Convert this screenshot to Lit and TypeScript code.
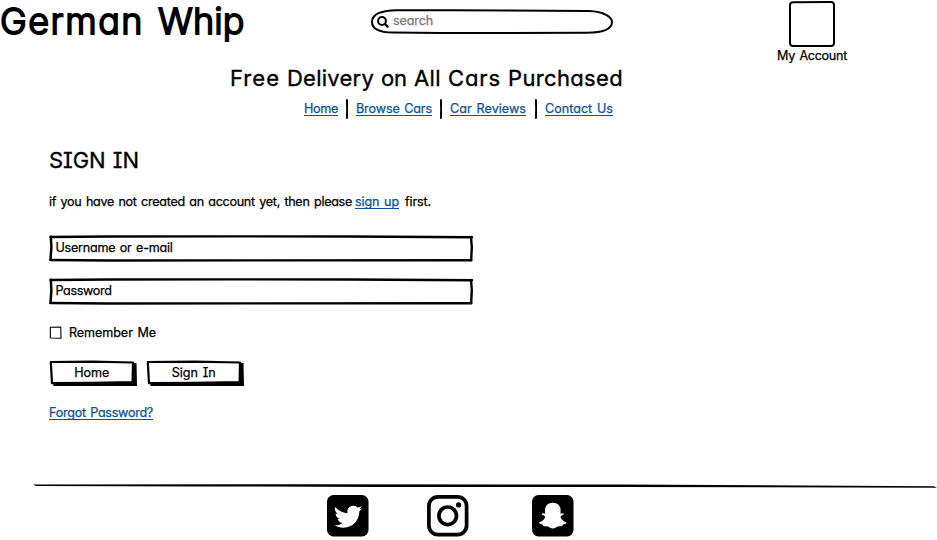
import { LitElement, html, css, svg } from "lit";
import { customElement, property } from "lit/decorators.js";

/** A run of lettering tracked so that it fills the given width. */
@customElement("fit-text")
class FitText extends LitElement {
  @property({ type: Number }) width = 0;
  @property() text = "";

  static styles = css`
    :host { display: inline-block; white-space: pre; flex: none; }
    span { display: inline-block; }
  `;

  render() {
    return html`<span>${this.text}</span>`;
  }

  updated() {
    const span = this.renderRoot.querySelector("span") as HTMLElement;
    span.style.letterSpacing = "0px";
    const natural = span.getBoundingClientRect().width;
    const gap = (this.width - natural) / this.text.length;
    span.style.letterSpacing = gap.toFixed(3) + "px";
  }
}

const t = (text: string, width: number) => html`<fit-text .text=${text} .width=${width}></fit-text>`;

const fieldFrame = svg`
  <path d="M1.6 2 L60 1.5 L180 1.4 L300 1.5 L423 2.2" stroke-width="2.4"/>
  <path d="M1.4 25 L60 25.5 L200 25.4 L422.3 25.2" stroke-width="2.4"/>
  <path d="M1.8 1.8 L2.4 12 L1.5 24.8" stroke-width="2.5"/>
  <path d="M422 2 L422.8 12 L422.2 25" stroke-width="2.4"/>`;

@customElement("app-root")
class AppRoot extends LitElement {
  static styles = css`
    :host {
      display: block;
      width: 937px;
      height: 540px;
      overflow: hidden;
      background: #fff;
      color: #000;
      font: 400 12.6px/22px Inter, "Noto Sans", sans-serif;
      font-feature-settings: "cv11" 1, "cv08" 1, "calt" 0;
      word-spacing: 1.2px;
      -webkit-text-stroke: 0.25px currentColor;
    }
    svg { display: block; fill: none; stroke: #000; stroke-linecap: round; stroke-linejoin: round; flex: none; }
    header { display: flex; height: 63px; align-items: flex-start; }
    .brand {
      display: flex; gap: 14px; margin: 0; width: 371px;
      font-size: 36px; line-height: 43px; font-weight: 300;
      -webkit-text-stroke: 1.8px #000; stroke-linejoin: round;
    }
    .search { display: grid; width: 242px; height: 25px; margin-top: 9px; }
    .search > * { grid-area: 1 / 1; }
    .search .hint { color: #77777f; padding: 2px 0 0 22px; height: 20px; line-height: 19px; }
    .account { margin: 1px 0 0 164px; width: 70px; display: flex; flex-direction: column; align-items: center; }
    .account svg { margin-bottom: -2px; }
    .promo { display: flex; gap: 7px; margin: 0 0 5px 230px; font-size: 22px; line-height: 30px; font-weight: 400; height: 30px; -webkit-text-stroke-width: 0.35px; }
    nav { display: flex; height: 22px; margin-left: 304px; }
    nav svg { margin: 1px 0 0; }
    a { color: #0b5394; text-decoration: none; height: 17px; border-bottom: 1px solid #0b5394; display: inline-block; }
    main { display: flex; flex-direction: column; align-items: flex-start; padding: 25px 0 0 49px; height: 362px; box-sizing: border-box; }
    h2 { margin: 0 0 16px; font-size: 22px; line-height: 30px; height: 30px; font-weight: 400; -webkit-text-stroke-width: 0.3px; }
    .intro { display: flex; height: 20px; margin: 0 0 24px; }
    .intro a { margin: 0 6px 0 3px; }
    .field { display: grid; width: 425px; height: 27px; margin-bottom: 16px; }
    .field > * { grid-area: 1 / 1; }
    .field .hint { padding: 2px 0 0 6.5px; }
    .remember { display: flex; align-items: flex-start; height: 20px; margin: 1px 0 18px; gap: 7px; }
    .remember svg { margin-top: 4px; }
    .actions { display: flex; gap: 9px; height: 27px; margin-bottom: 15px; }
    .button { display: grid; height: 27px; }
    .button > * { grid-area: 1 / 1; }
    .button .caption { padding: 2px 2.5px 0 0; text-align: center; }
    .rule { margin-bottom: 5px; }
    footer { display: flex; padding-left: 327px; }
    .solid { fill: #000; stroke: none; }
    .knock { fill: #fff; stroke: none; }
    .gram { margin-left: 58px; }
    .ghost { margin-left: 63px; }
  `;

  private divider(gapBefore: string, gapAfter: string) {
    return html`<svg style="padding:0 ${gapAfter} 0 ${gapBefore}" width="2" height="20"><path d="M.9 1 L1.2 10 L.9 19" stroke-width="2"/></svg>`;
  }

  private field(label: string, width: number) {
    return html`<div class="field">
      <svg width="425" height="27">${fieldFrame}</svg>
      <div class="hint">${t(label, width)}</div>
    </div>`;
  }

  private button(label: string, textWidth: number, w: number) {
    return html`<div class="button">
      <svg width=${w} height="27">
        <path class="solid" d="M${w - 5} 3 L${w - 0.5} 3 L${w} 26 L4.5 26 L4 22 L${w - 5} 22 Z"/>
        <path d="M1.8 2 L${w / 2} 1.7 L${w - 4} 2.5 L${w - 4.4} 22.2 L${w / 2} 22.8 L3 23.2 Z" fill="#fff" stroke-width="2.2"/>
      </svg>
      <div class="caption">${t(label, textWidth)}</div>
    </div>`;
  }

  render() {
    return html`
      <header>
        <h1 class="brand">${t("German", 144)}${t("Whip", 86.5)}</h1>
        <div class="search">
          <svg width="242" height="25">
            <path d="M26 1.2 L80 1.2 L218 2 C233 2.5 241 8 241 13 C241 20 233 23.6 216 23.8 L70 24 L22 23.6 C7 23.4 1 20 1 13 C1 6 9 1.4 26 1.2 Z" stroke-width="2"/>
            <circle cx="11" cy="12" r="3.9" stroke-width="2"/>
            <path d="M14 15 L16.6 17.6" stroke-width="2.3"/>
          </svg>
          <div class="hint">${t("search", 40)}</div>
        </div>
        <div class="account">
          <svg width="46" height="46"><path d="M4 1.2 L42 1 Q45 1 45 4 L45 42 Q45 45 42 45 L4 45 Q1 45 1 42 L1 4 Q1 1.2 4 1.2 Z" stroke-width="2"/></svg>
          ${t("My Account", 70)}
        </div>
      </header>
      <div class="promo">${t("Free", 50)}${t("Delivery", 87)}${t("on", 26)}${t("All", 27)}${t("Cars", 53)}${t("Purchased", 115)}</div>
      <nav>
        <a>${t("Home", 34)}</a>${this.divider("8px", "8px")}
        <a>${t("Browse Cars", 76)}</a>${this.divider("8px", "8px")}
        <a>${t("Car Reviews", 76)}</a>${this.divider("9px", "8px")}
        <a>${t("Contact Us", 68)}</a>
      </nav>
      <main>
        <h2>${t("SIGN IN", 90)}</h2>
        <div class="intro">
          ${t("if you have not created an account yet, then please", 303)}<a>${t("sign up", 44)}</a>${t("first.", 26)}
        </div>
        ${this.field("Username or e-mail", 117)}
        ${this.field("Password", 56)}
        <div class="remember">
          <svg width="13" height="13"><path d="M1.3 1.2 L11.8 1 L12 12.2 L1.4 12 Z" stroke-width="1.1"/></svg>
          ${t("Remember Me", 87)}
        </div>
        <div class="actions">${this.button("Home", 35, 88)}${this.button("Sign In", 44, 98)}</div>
        <a>${t("Forgot Password?", 104)}</a>
      </main>
      <svg class="rule" width="937" height="8" viewBox="0 482 937 8">
        <path class="solid" d="M33 484.4 L300 484.3 L620 484.6 L934 486.2 L937 487.8 L620 487 L380 486.9 L200 486.5 L36 485.9 Z"/>
      </svg>
      <footer>
        <svg width="42" height="42">
          <rect class="solid" width="41.5" height="41.5" rx="6.5"/>
          <path class="knock" d="M8.2 12 C12 16 16 18 20.6 18.2 C19.5 13.8 22.5 10.7 26.3 10.7 C28.2 10.7 29.7 11.5 30.8 12.6 C32.3 12.3 33.5 11.9 34.7 11.1 C34.2 12.6 33.5 13.3 32.5 14.1 L35 13.4 C34.3 14.6 33.5 15.4 32.3 16.2 C32.5 24.5 26.5 32.8 16.4 32.8 C13 32.8 10.2 31.9 7.5 30.3 C10.6 30.6 13.2 29.9 15.7 28 C13.1 27.8 11.3 26.3 10.6 24.1 L13 24 C10.2 23.2 8.7 21.2 8.6 18.6 L11.1 19.2 C8.3 17.3 7.2 14.5 8.2 12 Z"/>
        </svg>
        <svg class="gram" width="42" height="42">
          <rect x="1.9" y="1.9" width="37.7" height="37.7" rx="9" stroke-width="3.7"/>
          <circle cx="20.7" cy="20.8" r="8.8" stroke-width="3.7"/>
          <circle class="solid" cx="31.6" cy="9.9" r="2.6"/>
        </svg>
        <svg class="ghost" width="42" height="42">
          <rect class="solid" width="41.5" height="41.5" rx="6.5"/>
          <path class="knock" d="M20.8 7.7 C25.6 7.7 28.5 10.8 28.6 15 L28.5 18.4 C29.5 18.7 30.3 18 31.1 18.2 C32.4 18.8 31.8 19.8 30.5 20.3 C28.9 20.9 28.2 21.4 28.7 22.7 C29.8 25 31.5 26.5 34.3 27.3 C34.5 28.9 32.4 29.2 30.8 29.7 C30.3 30.4 30.5 31.3 29.6 31.3 C28 31.2 26.4 30.8 24.9 31.8 C23.6 32.8 22.5 33.5 20.8 33.5 C19.1 33.5 18 32.8 16.7 31.8 C15.2 30.8 13.6 31.2 12 31.3 C11.1 31.3 11.3 30.4 10.8 29.7 C9.2 29.2 7.1 28.9 7.3 27.3 C10.1 26.5 11.8 25 12.9 22.7 C13.4 21.4 12.7 20.9 11.1 20.3 C9.8 19.8 9.2 18.8 10.5 18.2 C11.3 18 12.1 18.7 13.1 18.4 L13 15 C13.1 10.8 16 7.7 20.8 7.7 Z"/>
        </svg>
      </footer>
    `;
  }
}
